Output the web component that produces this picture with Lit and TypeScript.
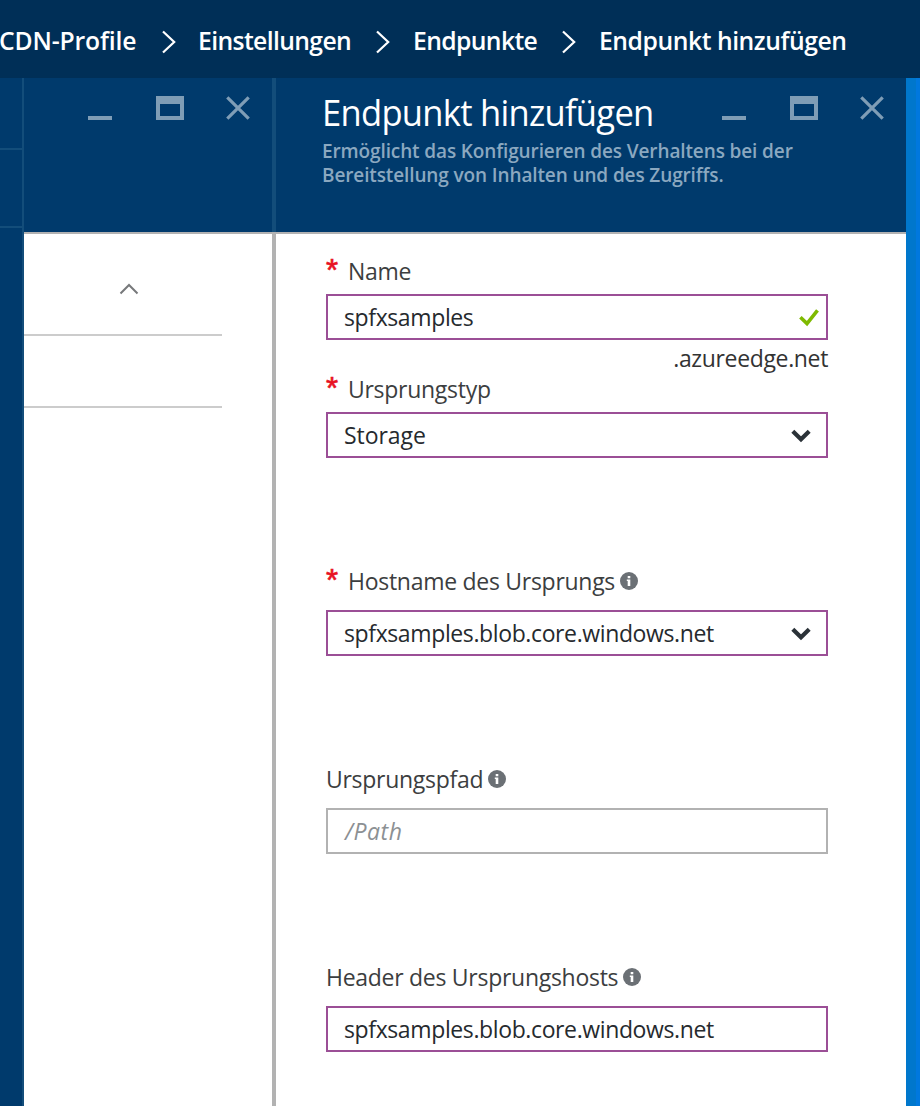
import { LitElement, html, css, svg, nothing } from "lit";
import { customElement, property } from "lit/decorators.js";

@customElement("window-controls")
class WindowControls extends LitElement {
  static styles = css`
    :host { display: block; width: 162px; height: 24px; }
    svg { display: block; }
  `;
  render() {
    return html`<svg width="162" height="24" viewBox="0 0 162 24" fill="#7f9db6">
      <rect x="0" y="20" width="24" height="4" />
      <path fill-rule="evenodd" d="M68 0h28v24h-28zM72 8v12h20v-12z" />
      <path d="M139.3 1.3L160.7 22.7M160.7 1.3L139.3 22.7" stroke="#7f9db6" stroke-width="3.2" />
    </svg>`;
  }
}

@customElement("form-field")
class FormField extends LitElement {
  @property() label = "";
  @property() value = "";
  @property() placeholder = "";
  @property() icon = "";
  @property() suffix = "";
  @property({ type: Boolean }) required = false;
  @property({ type: Boolean }) info = false;

  static styles = css`
    :host { display: block; width: 502px; font-size: 23px; line-height: 32px; }
    .label { display: flex; height: 32px; color: #3c3e40; white-space: nowrap; letter-spacing: -0.28px; }
    .star {
      width: 22px; color: #e81123; font: 400 31px/32px "Liberation Sans", sans-serif;
      letter-spacing: 0; -webkit-text-stroke: 0.7px #e81123;
    }
    .info { margin: 7px 0 0 5px; width: 18px; height: 18px; }
    .box {
      box-sizing: border-box; height: 46px; margin-top: var(--label-gap, 13px);
      border: 2px solid #9b4f96; background: #fff; color: #262a2e; letter-spacing: var(--value-spacing, -0.38px);
      display: flex; align-items: center; justify-content: space-between; padding: 0 6px 0 16px;
    }
    .box.empty { border-color: #b2b2b2; color: #8c9093; font-style: italic; letter-spacing: 0.5px; padding-left: 17px; }
    .drop { margin: 2px 9px 0 0; }
    .check { margin: 2px 1px 0 0; }
    .suffix { text-align: right; color: #333; margin-top: 2px; letter-spacing: -0.35px; }
  `;

  private glyph() {
    if (this.icon === "check")
      return html`<svg class="check" width="20" height="18" viewBox="0 0 20 18"><path d="M1.4 8.2L8 14.6L18.5 1.4" fill="none" stroke="#7fba00" stroke-width="3.6" /></svg>`;
    if (this.icon === "drop")
      return html`<svg class="drop" width="20" height="14" viewBox="0 0 20 14"><path d="M1.8 2.2L10 10.2L18.2 2.2" fill="none" stroke="#2b3238" stroke-width="4.2" /></svg>`;
    return nothing;
  }

  render() {
    return html`
      <div class="label">
        ${this.required ? html`<span class="star">*</span>` : nothing}
        <span>${this.label}</span>
        ${this.info
          ? html`<svg class="info" viewBox="0 0 18 18"><circle cx="9" cy="9" r="9" fill="#6b7075" />
              ${svg`<path d="M7.7 4h2.6v2.3h-2.6zM6.8 7.6h3.5v6.4h-2.6v-5h-.9z" fill="#fff" />`}</svg>`
          : nothing}
      </div>
      <div class="box ${this.value ? "" : "empty"}"><span>${this.value || this.placeholder}</span>${this.glyph()}</div>
      ${this.suffix ? html`<div class="suffix">${this.suffix}</div>` : nothing}
    `;
  }
}

@customElement("app-root")
class AppRoot extends LitElement {
  static styles = css`
    :host {
      display: flex; flex-direction: column; width: 920px; height: 1106px; overflow: hidden;
      background: #fff; font-family: "Open Sans", "Noto Sans", sans-serif;
    }
    .crumbs {
      flex: none; height: 78px; background: #002f57; color: #fff;
      display: grid; grid-template-columns: 162px 36px 178px 37px 149px 37px 1fr;
      font-weight: 600; font-size: 26px; line-height: 36px; white-space: nowrap;
    }
    .crumb { margin-top: 22px; display: block; transform-origin: 0 0; transform: scaleX(0.95); letter-spacing: -0.65px; }
    .crumb.first { margin-left: -1px; letter-spacing: -0.15px; }
    .crumb.last { letter-spacing: -0.47px; }
    .arrow { margin-top: 30px; }
    .blades { flex: 1; display: flex; min-height: 0; }
    .rail { flex: none; width: 22px; background: #003a6c; border-right: 2px solid #134d7a; }
    .rail-item { height: 76px; border-bottom: 2px solid #134d7a; }
    .rail-item.top { height: 70px; }
    .blade { flex: none; display: flex; flex-direction: column; }
    .side { width: 248px; border-right: 4px solid #b2b2b2; }
    .main { width: 630px; }
    .head { height: 154px; background: #003a6c; border-bottom: 2px solid #b2b2b2; display: flex; flex: none; }
    .side .head { margin-right: -4px; border-right: 4px solid #134d7a; border-bottom: 0; }
    .rule { height: 2px; flex: none; background: #b2b2b2; }
    .side window-controls { margin: 18px 0 0 64px; }
    .main window-controls { margin-top: 18px; }
    .titles { width: 400px; margin-left: 46px; white-space: nowrap; }
    .title {
      margin: 10px 0 0; height: 50px; color: #fff; font-size: 36px; line-height: 50px; font-weight: 400;
      transform-origin: 0 0; transform: scaleX(0.96); letter-spacing: -0.75px;
    }
    .sub { margin: 1px 0 0; color: #8ba8c0; font-size: 19px; line-height: 24px; font-weight: 600; letter-spacing: -0.12px; }
    .section { height: 100px; width: 198px; border-bottom: 2px solid #ccc; }
    .section.next { height: 70px; }
    .up { display: block; margin: 0 0 0 95px; padding-top: 49px; }
    .form { padding: 21px 0 0 50px; display: grid; justify-items: start; }
    .tight { --label-gap: 7px; }
    .wide { --value-spacing: -0.05px; }
    .gap-a { margin-bottom: -1px; }
    .gap-b { margin-bottom: 107px; }
    .edge { flex: 1; background: #0077cc; border-right: 4px solid #0078de; }
  `;

  private arrow() {
    return html`<svg class="arrow" width="16" height="24" viewBox="0 0 16 24"><path d="M1 1.5L12.2 12L1 22.5" fill="none" stroke="#fff" stroke-width="2.2" /></svg>`;
  }

  render() {
    return html`
      <nav class="crumbs">
        <span class="crumb first">CDN-Profile</span>${this.arrow()}
        <span class="crumb">Einstellungen</span>${this.arrow()}
        <span class="crumb">Endpunkte</span>${this.arrow()}
        <span class="crumb last">Endpunkt hinzufügen</span>
      </nav>
      <div class="blades">
        <div class="rail"><div class="rail-item top"></div><div class="rail-item"></div></div>
        <section class="blade side">
          <div class="head"><window-controls></window-controls></div>
          <div class="rule"></div>
          <div class="section">
            <svg class="up" width="20" height="12" viewBox="0 0 20 12"><path d="M1.5 10.5L10 2L18.5 10.5" fill="none" stroke="#77797b" stroke-width="2" /></svg>
          </div>
          <div class="section next"></div>
        </section>
        <section class="blade main">
          <div class="head">
            <div class="titles">
              <h1 class="title">Endpunkt hinzufügen</h1>
              <p class="sub">Ermöglicht das Konfigurieren des Verhaltens bei der<br />Bereitstellung von Inhalten und des Zugriffs.</p>
            </div>
            <window-controls></window-controls>
          </div>
          <div class="form">
            <form-field class="tight gap-a" label="Name" value="spfxsamples" icon="check" suffix=".azureedge.net" required></form-field>
            <form-field class="tight wide gap-b" label="Ursprungstyp" value="Storage" icon="drop" required></form-field>
            <form-field class="gap-b" label="Hostname des Ursprungs" value="spfxsamples.blob.core.windows.net" icon="drop" required info></form-field>
            <form-field class="gap-b" label="Ursprungspfad" placeholder="/Path" info></form-field>
            <form-field label="Header des Ursprungshosts" value="spfxsamples.blob.core.windows.net" info></form-field>
          </div>
        </section>
        <div class="edge"></div>
      </div>
    `;
  }
}
